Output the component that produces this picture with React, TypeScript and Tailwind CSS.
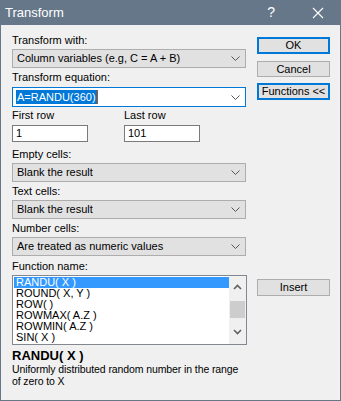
import React from 'react';

const font = { fontFamily: '"Liberation Sans", Arial, sans-serif' };

const Chevron: React.FC = () => (
  <svg width="9" height="5" viewBox="0 0 9 5" className="shrink-0">
    <path d="M0.5 0.5 L4.5 4.5 L8.5 0.5" fill="none" stroke="#555" strokeWidth="1" />
  </svg>
);

const Label: React.FC<{ children: React.ReactNode; className?: string }> = ({ children, className = '' }) => (
  <div className={`text-[11px] leading-[13px] text-black ${className}`}>{children}</div>
);

const Combo: React.FC<{ value: string; className?: string }> = ({ value, className = '' }) => (
  <div className={`h-[19px] border border-[#adadad] bg-[#e1e1e1] flex items-center justify-between pl-[4px] pr-[5px] text-[11px] ${className}`}>
    <span>{value}</span>
    <Chevron />
  </div>
);

const Btn: React.FC<{ label: string; primary?: boolean; className?: string }> = ({ label, primary, className = '' }) => (
  <div
    className={`w-[73px] flex items-center justify-center bg-[#e1e1e1] text-[11px] ${
      primary ? 'border-2 border-[#0078d7]' : 'border border-[#adadad]'
    } ${className}`}
  >
    {label}
  </div>
);

const functions = ['RANDU( X )', 'ROUND( X, Y )', 'ROW( )', 'ROWMAX( A.Z )', 'ROWMIN( A.Z )', 'SIN( X )'];

export default function App() {
  return (
    <div className="w-[341px] h-[401px] flex flex-col bg-[#f0f0f0] border-x border-b border-[#66778a] text-black" style={font}>
      {/* title bar */}
      <div className="h-[25px] -mx-px bg-[#66778a] flex items-center text-white">
        <span className="ml-[5px] text-[13px] flex-1">Transform</span>
        <span className="text-[14px] mr-[37px]">?</span>
        <svg width="12" height="12" viewBox="0 0 12 12" className="mr-[17px]">
          <path d="M1 1 L11 11 M11 1 L1 11" stroke="white" strokeWidth="1.1" />
        </svg>
      </div>

      <div className="flex pl-[11px]">
        {/* left column */}
        <div className="w-[235px] flex flex-col pt-[9px]">
          <Label>Transform with:</Label>
          <Combo value="Column variables (e.g, C = A + B)" className="mt-[2px] w-[234px]" />

          <Label className="mt-[3px]">Transform equation:</Label>
          <div className="mt-[3px] h-[20px] w-[234px] border border-[#0078d7] bg-white flex items-center justify-between pl-[3px] pr-[5px] text-[11px]">
            <span className="flex items-center">
              <span className="bg-[#0078d7] text-white leading-[14px] px-px">A=RANDU(360)</span>
              <span className="w-px h-[14px] bg-[#c05000]" />
            </span>
            <Chevron />
          </div>

          <div className="flex mt-[2px]">
            <div className="w-[112px]">
              <Label>First row</Label>
              <div className="mt-[3px] w-[76px] h-[17px] border border-[#7a7a7a] bg-white text-[11px] leading-[15px] pl-[3px]">1</div>
            </div>
            <div>
              <Label>Last row</Label>
              <div className="mt-[3px] w-[76px] h-[17px] border border-[#7a7a7a] bg-white text-[11px] leading-[15px] pl-[3px]">101</div>
            </div>
          </div>

          <Label className="mt-[6px]">Empty cells:</Label>
          <Combo value="Blank the result" className="mt-[2px] w-[234px]" />

          <Label className="mt-[3px]">Text cells:</Label>
          <Combo value="Blank the result" className="mt-[2px] w-[234px]" />

          <Label className="mt-[3px]">Number cells:</Label>
          <Combo value="Are treated as numeric values" className="mt-[2px] w-[234px]" />

          <Label className="mt-[4px]">Function name:</Label>
          <div className="mt-[2px] w-[235px] h-[70px] border border-[#828790] bg-white flex">
            <div className="flex-1 pt-px pl-px">
              {functions.map((f, i) => (
                <div
                  key={f}
                  className={`h-[11px] leading-[11px] text-[11px] pl-[2px] ${i === 0 ? 'bg-[#3399ff] text-white' : ''}`}
                >
                  {f}
                </div>
              ))}
            </div>
            <div className="w-[17px] flex flex-col items-center bg-[#f0f0f0]">
              <svg width="9" height="6" viewBox="0 0 9 6" className="mt-[8px]">
                <path d="M1 5 L4.5 1.5 L8 5" fill="none" stroke="#606060" strokeWidth="1.6" />
              </svg>
              <div className="w-[15px] h-[17px] bg-[#cdcdcd] mt-[11px]" />
              <svg width="9" height="6" viewBox="0 0 9 6" className="mt-[11px]">
                <path d="M1 1 L4.5 4.5 L8 1" fill="none" stroke="#606060" strokeWidth="1.6" />
              </svg>
            </div>
          </div>

          <div className="mt-[3px] text-[13px] leading-[15px] font-bold">RANDU( X )</div>
          <div className="text-[10.5px] leading-[12px] whitespace-nowrap tracking-[-0.1px]">
            Uniformly distributed random number in the range
            <br />
            of zero to X
          </div>
        </div>

        {/* right column */}
        <div className="ml-[10px] flex flex-col pt-[12px]">
          <Btn label="OK" primary className="h-[17px]" />
          <Btn label="Cancel" className="h-[16px] mt-[7px]" />
          <Btn label="Functions <<" primary className="h-[17px] mt-[6px]" />
          <Btn label="Insert" className="h-[17px] mt-[179px]" />
        </div>
      </div>
    </div>
  );
}
